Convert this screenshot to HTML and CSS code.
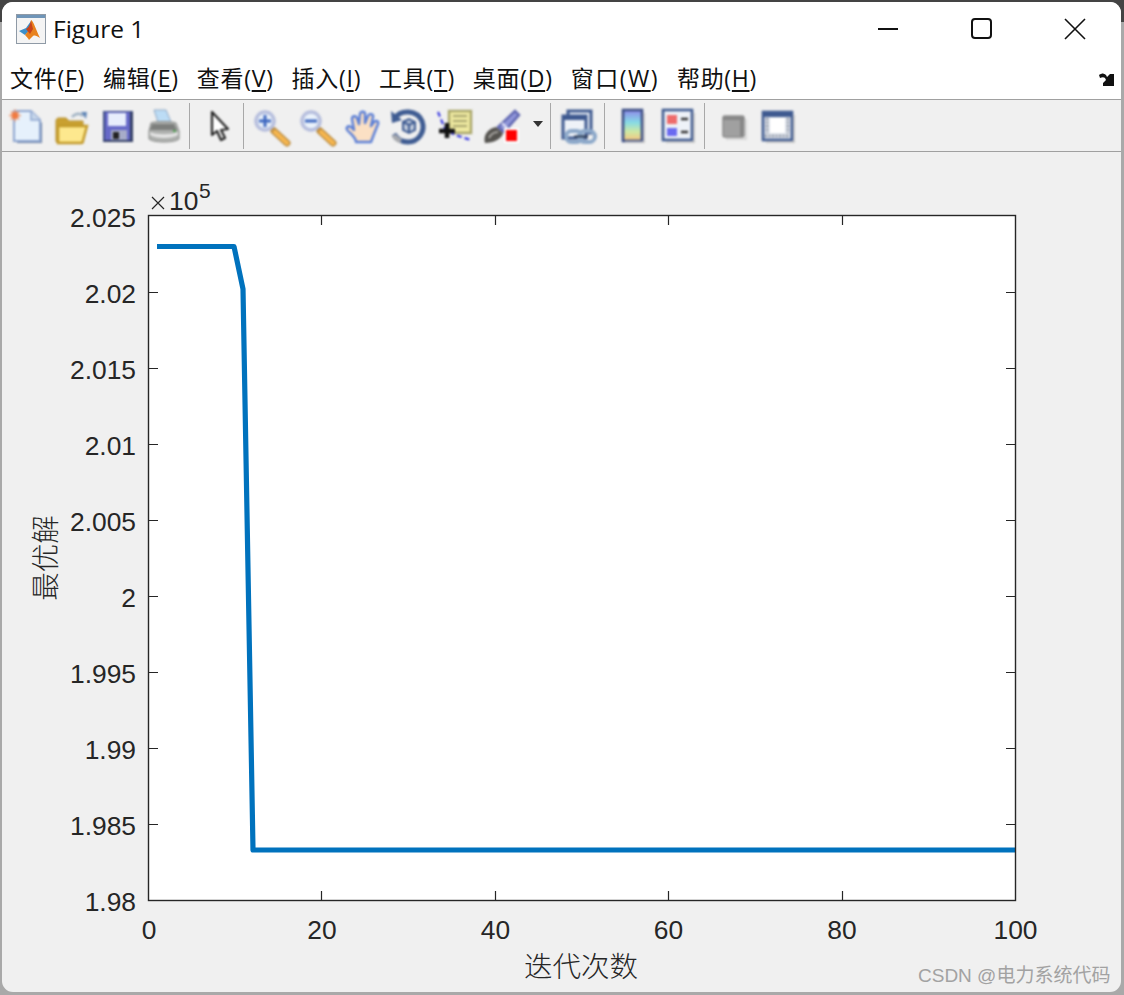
FILE: index.html
```html
<!DOCTYPE html>
<html lang="zh">
<head>
<meta charset="utf-8">
<title>Figure 1</title>
<link rel="stylesheet" href="styles.css">
</head>
<body>
<main class="window">
  <header class="titlebar">
    <svg class="app-icon" viewBox="0 0 30 30">
      <rect x="0.5" y="0.5" width="29" height="29" fill="#f4f4f4" stroke="#8f9aa6"/>
      <rect x="1" y="1" width="28" height="3" fill="#6f95b8"/>
      <path d="M3 17l7-3 5-7-1 9-5 5z" fill="#3d8fc9"/>
      <path d="M15 6c2 0 5 10 9 18-3-2-5-3-7-2l-4 4c-1-2-3-4-4-5l4-5z" fill="#e8821e"/>
      <path d="M15 7c-1 4-3 7-5 8l4 5 3-5z" fill="#c9431a"/>
    </svg>
    <h1 class="title">Figure 1</h1>
    <div class="window-buttons">
      <svg class="win-btn" viewBox="0 0 93 40"><path class="win-glyph" d="M36 20h20"/></svg>
      <svg class="win-btn" viewBox="0 0 93 40"><rect class="win-glyph" x="37" y="10" width="19" height="19" rx="3"/></svg>
      <svg class="win-btn" viewBox="0 0 93 40"><path class="win-glyph thin" d="M37 10l20 20M57 10l-20 20"/></svg>
    </div>
  </header>

  <nav class="menubar">
    <span class="menu-item">文件(<u>F</u>)</span>
    <span class="menu-item">编辑(<u>E</u>)</span>
    <span class="menu-item">查看(<u>V</u>)</span>
    <span class="menu-item">插入(<u>I</u>)</span>
    <span class="menu-item">工具(<u>T</u>)</span>
    <span class="menu-item">桌面(<u>D</u>)</span>
    <span class="menu-item menu-item-wide">窗口(<u>W</u>)</span>
    <span class="menu-item">帮助(<u>H</u>)</span>
    <svg class="dock-arrow" viewBox="0 0 16 16"><path d="M0 3c3-2 5-2 7 0l1 2 3-3 4 0v12H4v-3l3-3-1-2C5 5 3 5 1 6z" fill="#111"/></svg>
  </nav>

  <div class="toolbar">
    <svg class="tool" viewBox="0 0 46 36">
      <path d="M15 6h16l9 9v20H15z" fill="#6f83a8"/>
      <path d="M12 3h17l9 9v21H12z" fill="#e6f1fc" stroke="#8ea6d0" stroke-width="2"/>
      <path d="M29 3v9h9" fill="#c7d6ea" stroke="#8ea6d0" stroke-width="1.5"/>
      <path d="M13 1.500v12M7 7.500h12M9 3.500l8 8M17 3.500l-8 8" stroke="#ef9a70" stroke-width="1.6"/>
      <circle cx="13" cy="7.500" r="3.400" fill="#f07b42"/>
    </svg>
    <svg class="tool" viewBox="0 0 46 36">
      <path d="M8 13c0-2 1-3 3-3h7l3 3h14v20c0 1-1 2-2 2H10c-1 0-2-1-2-2z" fill="#c9a030" stroke="#b68f2e"/>
      <path d="M10 18h29l-4 15c0 1-1 2-2 2H10z" fill="#fde88e" stroke="#c39a2b" stroke-width="2.400"/>
      <path d="M24 9c4-4 8-4 11-1" fill="none" stroke="#9fb1c2" stroke-width="2.400"/>
      <path d="M33 4l6 0-1 7z" fill="#5e84b5"/>
    </svg>
    <svg class="tool" viewBox="0 0 46 36">
      <path d="M9 3h30v31H9z" fill="#3f4f85"/>
      <path d="M11 4h26v28H11z" fill="#6669c8"/>
      <rect x="14" y="5" width="18" height="13" fill="#e8eefc"/>
      <rect x="17" y="22" width="16" height="11" fill="#a7acc9"/>
      <rect x="19" y="24" width="6" height="7" fill="#222"/>
      <path d="M36 4h3v30H10v-2h26z" fill="#333f66"/>
    </svg>
    <svg class="tool" viewBox="0 0 46 36">
      <path d="M14 2h12l5 12H18z" fill="#bcdcf5" stroke="#8fa8c4"/>
      <path d="M11 15c3-2 22-2 25 0l3 8v8c-4 4-26 4-30 0v-8z" fill="#aeb0ae" stroke="#8a8c8a"/>
      <path d="M10 24c6 3 22 3 28 0v3c-6 4-22 4-28 0z" fill="#e4e4e4"/>
      <path d="M12 16h22l3 6H10z" fill="#7d7f7d"/>
      <rect x="33" y="22" width="3" height="2" fill="#54a654"/>
    </svg>
    <span class="sep sep-a"></span>
    <svg class="tool" viewBox="0 0 46 36">
      <path d="M15 4l0 23 5-4 4 9 4-2-4-8 7-1z" fill="#fff" stroke="#222" stroke-width="2.200" stroke-linejoin="round"/>
    </svg>
    <span class="sep sep-b"></span>
    <svg class="tool" viewBox="0 0 46 36">
      <path d="M27 23l13 12" stroke="#b98a3e" stroke-width="7" stroke-linecap="round"/>
      <path d="M28 24l12 11" stroke="#f6b64f" stroke-width="4.400" stroke-linecap="round"/>
      <circle cx="18" cy="13" r="9" fill="#eaf2fb" stroke="#b6bedd" stroke-width="3.500"/>
      <path d="M12 13h12M18 7v12" stroke="#3e68c0" stroke-width="3"/>
    </svg>
    <svg class="tool" viewBox="0 0 46 36">
      <path d="M27 23l13 12" stroke="#b98a3e" stroke-width="7" stroke-linecap="round"/>
      <path d="M28 24l12 11" stroke="#f6b64f" stroke-width="4.400" stroke-linecap="round"/>
      <circle cx="18" cy="13" r="9" fill="#eaf2fb" stroke="#b6bedd" stroke-width="3.500"/>
      <path d="M12 13h12" stroke="#3e68c0" stroke-width="3"/>
    </svg>
    <svg class="tool" viewBox="0 0 46 36">
      <path d="M17 34c0-4-4-7-8-11-3-3 0-6 3-4l3 3-2-11c0-3 4-4 5-1l2 6 1-10c0-3 5-3 5 0l0 9 3-7c1-3 6-2 5 1l-2 9 3-4c2-2 5-1 4 2l-4 10-3 8z" fill="#fbe0c4" stroke="#5b7fd6" stroke-width="2.400" stroke-linejoin="round"/>
    </svg>
    <svg class="tool" viewBox="0 0 46 36">
      <path d="M10 10C16 1 32 2 37 13c4 11-4 21-14 21-6 0-11-3-14-8" fill="none" stroke="#3f5c92" stroke-width="5"/>
      <path d="M9 27c1 3 4 5 7 6" stroke="#a7a9ae" stroke-width="5" fill="none"/>
      <path d="M6 3l1 12 10-3z" fill="#3f5c92"/>
      <path d="M18 14l6-3 6 3v8l-6 3-6-3z" fill="#bfc9da" stroke="#3f5c92" stroke-width="2"/>
      <path d="M18 14l6 3 6-3M24 17v8" fill="none" stroke="#3f5c92" stroke-width="2"/>
    </svg>
    <svg class="tool" viewBox="0 0 46 36">
      <rect x="18" y="3" width="22" height="22" fill="#eee9a0" stroke="#a9a66a" stroke-width="2.400"/>
      <path d="M22 8h14M22 13h14M22 18h14" stroke="#aaa670" stroke-width="2"/>
      <path d="M7 4l7 17 10 6 16 5" fill="none" stroke="#2a2ae0" stroke-width="2" stroke-dasharray="5 3"/>
      <path d="M16 15v15M8 23h16" stroke="#111" stroke-width="4.500"/>
    </svg>
    <svg class="tool tool-wide" viewBox="0 0 50 36">
      <path d="M21 19L38 3l4 4-15 17z" fill="#8f95d8" stroke="#5f66b0" stroke-width="2.400"/>
      <path d="M25 15l6 6" stroke="#e4e6f8" stroke-width="2"/>
      <path d="M8 35c-2-7 2-14 11-16l7 6c-1 6-10 10-18 10z" fill="#55534f"/>
      <path d="M12 30c2-4 6-6 9-6" stroke="#a8a6a2" stroke-width="2" fill="none"/>
      <rect x="27" y="20" width="15" height="15" fill="#fff"/>
      <rect x="29" y="22" width="11" height="11" fill="#f00"/>
    </svg>
    <svg class="tool-drop" viewBox="0 0 23 36"><path d="M6 13h10l-5 6z" fill="#333"/></svg>
    <span class="sep sep-c"></span>
    <svg class="tool" viewBox="0 0 46 36">
      <path d="M14 3h23v22H14z" fill="#eef2f8" stroke="#3f5a90" stroke-width="3"/>
      <path d="M9 8h23v22H9z" fill="#eef2f8" stroke="#3f5a90" stroke-width="3"/>
      <path d="M9 7h23v5H9z" fill="#3f5a90"/>
      <rect x="12" y="23" width="16" height="11" rx="5.500" fill="none" stroke="#8ca8c9" stroke-width="4"/>
      <rect x="25" y="23" width="16" height="11" rx="5.500" fill="none" stroke="#8ca8c9" stroke-width="4"/>
      <path d="M20 28.500h14" stroke="#2d3b52" stroke-width="2"/>
    </svg>
    <span class="sep sep-d"></span>
    <svg class="tool" viewBox="0 0 46 36">
      <defs><linearGradient id="bar" x1="0" y1="0" x2="0" y2="1">
        <stop offset="0" stop-color="#8f88ea"/><stop offset="0.4" stop-color="#86dbe6"/><stop offset="0.7" stop-color="#cfe9a4"/><stop offset="1" stop-color="#f7c27e"/>
      </linearGradient></defs>
      <rect x="14" y="2" width="19" height="31" fill="url(#bar)" stroke="#3d4f85" stroke-width="2.600"/>
      <path d="M35 5v29H16" stroke="#bcbcbc" stroke-width="1.500" fill="none"/>
    </svg>
    <svg class="tool" viewBox="0 0 46 36">
      <rect x="8" y="2" width="29" height="30" fill="#eef2f8" stroke="#3f5a90" stroke-width="2.600"/>
      <rect x="12" y="7" width="10" height="9" fill="#ee6b6b"/>
      <rect x="12" y="20" width="10" height="8" fill="#6a6af0"/>
      <path d="M26 11h7M26 24h7" stroke="#333" stroke-width="2.400"/>
      <path d="M39 5v29H11" stroke="#bcbcbc" stroke-width="1.500" fill="none"/>
    </svg>
    <span class="sep sep-e"></span>
    <svg class="tool" viewBox="0 0 46 36">
      <rect x="13" y="8" width="21" height="21" rx="2" fill="#a0a0a0" stroke="#8a8a8a" stroke-width="1.500"/>
      <path d="M13 10.500h21M31.500 10v18" stroke="#868686" stroke-width="3"/>
      <path d="M36 11v20H16" stroke="#d0d0d0" stroke-width="1.400" fill="none"/>
    </svg>
    <svg class="tool" viewBox="0 0 46 36">
      <rect x="7" y="4" width="29" height="28" fill="#e2e6ee" stroke="#3f5a90" stroke-width="2.600"/>
      <rect x="7" y="4" width="29" height="5" fill="#3f5a90"/>
      <rect x="14" y="10" width="15" height="15" fill="#fff"/>
      <path d="M11 10v15M32 10v15M9 28h25" stroke="#8f97a6" stroke-width="3" stroke-dasharray="2 1.500"/>
      <path d="M38 7v27H10" stroke="#bcbcbc" stroke-width="1.500" fill="none"/>
    </svg>
  </div>

  <section class="canvas">
    <svg class="plot" viewBox="2 152 1119 840">
      <rect class="axes-bg" x="148.500" y="215.500" width="867" height="685"/>
      <polyline class="series" points="157,246.500 234,246.500 243,289 253,850 1015,850"/>
      <rect class="axes-frame" x="148.500" y="215.500" width="867" height="685"/>
      <path class="ticks" d="M321.500 900v-9M495.500 900v-9M668.500 900v-9M842.500 900v-9M321.500 216v9M495.500 216v9M668.500 216v9M842.500 216v9M149 292.500h9M149 368.500h9M149 444.500h9M149 520.500h9M149 596.500h9M149 672.500h9M149 748.500h9M149 824.500h9M1015 292.500h-9M1015 368.500h-9M1015 444.500h-9M1015 520.500h-9M1015 596.500h-9M1015 672.500h-9M1015 748.500h-9M1015 824.500h-9"/>
      <g class="ylabels">
        <text x="136" y="227">2.025</text>
        <text x="136" y="303">2.02</text>
        <text x="136" y="379">2.015</text>
        <text x="136" y="455">2.01</text>
        <text x="136" y="531">2.005</text>
        <text x="136" y="607">2</text>
        <text x="136" y="683">1.995</text>
        <text x="136" y="759">1.99</text>
        <text x="136" y="835">1.985</text>
        <text x="136" y="911">1.98</text>
      </g>
      <g class="xlabels">
        <text x="149" y="939">0</text>
        <text x="322" y="939">20</text>
        <text x="495.500" y="939">40</text>
        <text x="668.500" y="939">60</text>
        <text x="842" y="939">80</text>
        <text x="1015.500" y="939">100</text>
      </g>
      <path class="times" d="M152 197l12 12M164 197l-12 12"/>
      <text class="exp-base" x="169" y="210">10</text>
      <text class="exp-power" x="199" y="198">5</text>
      <text class="axis-title" x="581" y="977">迭代次数</text>
      <text class="axis-title" transform="translate(56 558) rotate(-90)">最优解</text>
      <text class="watermark" x="918" y="982">CSDN @电力系统代码</text>
    </svg>
  </section>
</main>
</body>
</html>
```
FILE: styles.css
```css
* { box-sizing: border-box; }
html, body { margin: 0; height: 995px; overflow: hidden; }
body {
  background: linear-gradient(#444 0, #444 22px, #a9a9a9 22px);
  padding: 2px 3px 3px 2px;
}
.window {
  height: 990px;
  display: flex;
  flex-direction: column;
  background: #f0f0f0;
  border-radius: 11px;
  overflow: hidden;
}
.titlebar {
  height: 60px;
  flex: none;
  display: flex;
  align-items: center;
  background: #fff;
  padding: 0 0 6px 14px;
}
.app-icon { width: 30px; height: 30px; flex: none; }
.title {
  margin: 0 0 2px 7px;
  font: 400 24.500px "Open Sans", "Noto Sans", sans-serif;
  color: #111;
  flex: 1;
}
.window-buttons { display: flex; }
.win-btn { width: 93px; height: 40px; display: block; }
.win-glyph { fill: none; stroke: #111; stroke-width: 2; }
.win-glyph.thin { stroke-width: 1.600; }
.menubar {
  height: 38px;
  flex: none;
  display: flex;
  align-items: center;
  gap: 18px;
  background: #fff;
  padding: 0 0 7px 8px;
  border-bottom: 1px solid #a0a0a0;
  font: 400 23px "Open Sans", "Noto Sans CJK SC", sans-serif;
  color: #111;
  position: relative;
}
.menu-item { white-space: nowrap; letter-spacing: 0.700px; }
.menu-item-wide { letter-spacing: 1.500px; }
.menu-item u { text-underline-offset: 3px; }
.dock-arrow {
  position: absolute;
  right: 6px;
  top: 10px;
  width: 16px;
  height: 16px;
}
.toolbar {
  height: 52px;
  flex: none;
  display: flex;
  align-items: center;
  background: #f0f0f0;
  border-bottom: 1px solid #a0a0a0;
}
.tool { width: 46px; height: 36px; flex: none; filter: blur(0.800px); overflow: visible; }
.tool-wide { width: 50px; }
.tool-drop { width: 23px; height: 36px; flex: none; filter: blur(0.400px); }
.sep { width: 1px; height: 46px; flex: none; background: #a8a8a8; }
.sep-a { margin: 0 7px 0 3px; }
.sep-b { margin: 0 3px 0 0; }
.sep-c { margin: 0 3px 0 0; }
.sep-d { margin: 0 4px; }
.sep-e { margin: 0 5px 0 3px; }
.canvas { flex: 1; min-height: 0; }
.plot { display: block; width: 100%; height: 100%; }
.axes-bg { fill: #fff; }
.axes-frame { fill: none; stroke: #262626; stroke-width: 1.400; }
.ticks { fill: none; stroke: #262626; stroke-width: 1.200; }
.series { fill: none; stroke: #0072bd; stroke-width: 5.200; stroke-linejoin: round; }
.plot text { font-family: "Liberation Sans", Arial, sans-serif; fill: #262626; font-size: 26.400px; }
.ylabels text { text-anchor: end; }
.xlabels text { text-anchor: middle; }
.times { fill: none; stroke: #262626; stroke-width: 1.200; }
.plot .exp-power { font-size: 21px; }
.plot .axis-title {
  font-family: "Noto Sans CJK SC", sans-serif;
  font-size: 28.500px;
  font-weight: 300;
  text-anchor: middle;
}
.plot .watermark {
  font-family: "Liberation Sans", "Noto Sans CJK SC", sans-serif;
  font-size: 19px;
  fill: #a2a2a2;
}
```
